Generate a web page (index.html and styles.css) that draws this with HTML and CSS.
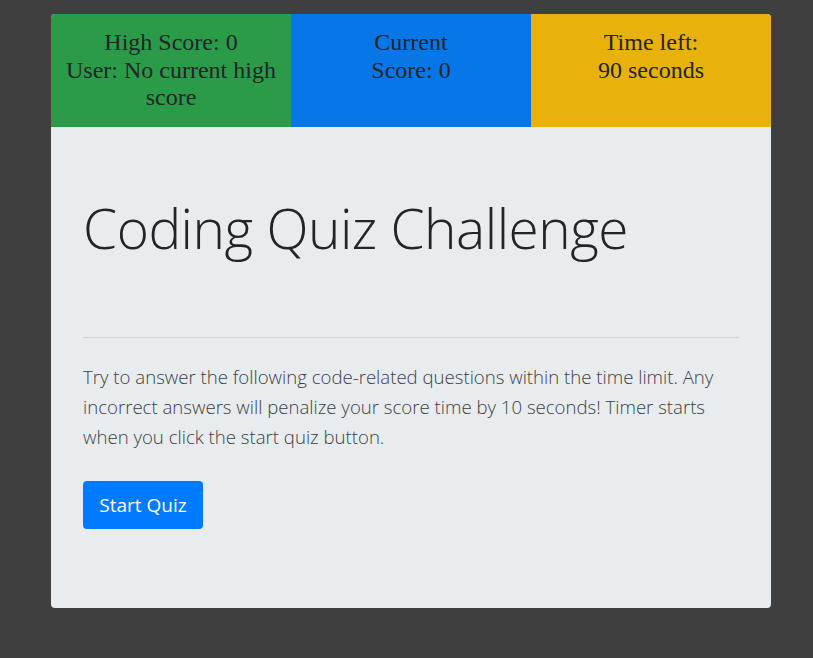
FILE: index.html
```html
<!DOCTYPE html>
<html lang="en">
<head>
<meta charset="utf-8">
<title>Coding Quiz Challenge</title>
<link rel="stylesheet" href="styles.css">
</head>
<body>
<main class="card">
  <section class="stats">
    <div class="stat stat-high">High Score: 0<br>User: No current high score</div>
    <div class="stat stat-current">Current<br>Score: 0</div>
    <div class="stat stat-time">Time left:<br>90 seconds</div>
  </section>
  <section class="jumbo">
    <h1 class="title">Coding Quiz Challenge</h1>
    <hr class="rule">
    <p class="lead">Try to answer the following code-related questions within the time limit. Any incorrect answers will penalize your score time by 10 seconds! Timer starts when you click the start quiz button.</p>
    <div class="actions"><button class="btn-start" type="button">Start Quiz</button></div>
  </section>
</main>
</body>
</html>
```
FILE: styles.css
```css
html, body {
  margin: 0;
  padding: 0;
}
body {
  background: #3f3f3f;
  font-family: "Open Sans", "Noto Sans", sans-serif;
  color: #212529;
  padding: 14px 42px 50px 51px;
}
.card {
  width: 720px;
  border-radius: 4px;
  overflow: hidden;
  background: #e9ecef;
}
.stats {
  display: grid;
  grid-template-columns: repeat(3, 1fr);
  height: 113px;
}
.stat {
  font-family: "Liberation Serif", "Times New Roman", serif;
  font-size: 24px;
  line-height: 27.5px;
  text-align: center;
  padding: 15px 8px 0;
  color: #212529;
}
.stat-high { background: #2a9b47; }
.stat-current { background: #0777e8; padding-left: 60px; padding-right: 60px; }
.stat-time { background: #e9b10c; }
.jumbo {
  padding: 64px 32px 63px;
}
.title {
  margin: 0;
  padding-top: 3px;
  font-size: 55px;
  font-weight: 300;
  line-height: 67px;
  letter-spacing: -0.5px;
}
.rule {
  margin: 76px 0 24px;
  border: 0;
  border-top: 1px solid #d3d6d9;
}
.lead {
  margin: 0 0 29px;
  font-size: 18.6px;
  line-height: 30px;
  font-weight: 300;
  color: #3a3f44;
}
.actions {
  margin-bottom: 16px;
  height: 48px;
}
.btn-start {
  box-sizing: border-box;
  font-family: "Open Sans", "Noto Sans", sans-serif;
  font-size: 19px;
  line-height: 30px;
  padding: 9px 0;
  width: 120px;
  height: 48px;
  white-space: nowrap;
  color: #fff;
  background: #007bff;
  border: 0;
  border-radius: 4px;
}
```
